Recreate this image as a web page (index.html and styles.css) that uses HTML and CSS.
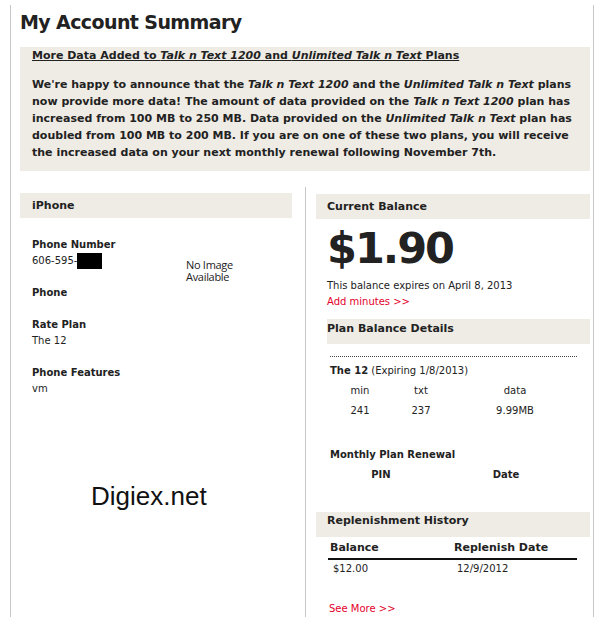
FILE: index.html
```html
<!DOCTYPE html>
<html>
<head>
<meta charset="utf-8">
<link rel="stylesheet" href="styles.css">
</head>
<body>
<div class="page">
  <h1 class="title">My Account Summary</h1>
  <div class="notice">
    <div class="notice-head"><u>More Data Added to <i>Talk n Text 1200</i> and <i>Unlimited Talk n Text</i> Plans</u></div>
    <p class="notice-body">We're happy to announce that the <i>Talk n Text 1200</i> and the <i>Unlimited Talk n Text</i> plans now provide more data! The amount of data provided on the <i>Talk n Text 1200</i> plan has increased from 100 MB to 250 MB. Data provided on the <i>Unlimited Talk n Text</i> plan has doubled from 100 MB to 200 MB. If you are on one of these two plans, you will receive the increased data on your next monthly renewal following November 7th.</p>
  </div>
  <div class="columns">
    <div class="col-left">
      <div class="bar bar-left">iPhone</div>
      <div class="phone">
        <div class="fields">
          <div class="field"><div class="label">Phone Number</div><div class="value">606-595-<span class="redact"></span></div></div>
          <div class="field"><div class="label">Phone</div></div>
          <div class="field"><div class="label">Rate Plan</div><div class="value">The 12</div></div>
          <div class="field"><div class="label">Phone Features</div><div class="value">vm</div></div>
        </div>
        <div class="noimage">No Image<br>Available</div>
      </div>
      <div class="watermark">Digiex.net</div>
    </div>
    <div class="col-right">
      <div class="bar bar-right">Current Balance</div>
      <div class="balance">$1.90</div>
      <div class="text">This balance expires on April 8, 2013</div>
      <div class="text link">Add minutes &gt;&gt;</div>
      <div class="bar bar-plan">Plan Balance Details</div>
      <div class="plan">
        <div class="plan-name"><b>The 12</b> (Expiring 1/8/2013)</div>
        <div class="usage">
          <span>min</span><span>txt</span><span>data</span>
          <span>241</span><span>237</span><span>9.99MB</span>
        </div>
        <div class="renew-title">Monthly Plan Renewal</div>
        <div class="renew">
          <span>PIN</span><span>Date</span>
        </div>
      </div>
      <div class="bar bar-right bar-hist">Replenishment History</div>
      <div class="hist">
        <div class="hist-head"><span>Balance</span><span>Replenish Date</span></div>
        <div class="hist-row"><span>$12.00</span><span>12/9/2012</span></div>
      </div>
      <div class="text link seemore">See More &gt;&gt;</div>
    </div>
  </div>
</div>
</body>
</html>
```
FILE: styles.css
```css
html, body {
  margin: 0;
  padding: 0;
  background: #fff;
}
body {
  font-family: "DejaVu Sans", Verdana, sans-serif;
  color: #222;
  font-size: 10px;
}
.page {
  margin: 5px 0 0 10px;
  width: 584px;
  height: 612px;
  border-left: 1px solid #c8c8c8;
  border-right: 1px solid #c8c8c8;
  padding-left: 9px;
  box-sizing: border-box;
}
.title {
  margin: 0;
  padding-top: 5px;
  font-size: 19px;
  line-height: 24px;
  letter-spacing: -0.6px;
  font-weight: bold;
  color: #222;
}
.notice {
  margin-top: 13px;
  width: 570px;
  background: #efece5;
  padding: 1px 12px 10px 12px;
  box-sizing: border-box;
  font-weight: bold;
  font-size: 11px;
}
.notice-head {
  line-height: 16px;
}
.notice-body {
  margin: 12px 0 0 0;
  line-height: 17px;
}
.columns {
  display: flex;
  margin-top: 16px;
  height: 430px;
}
.col-left {
  width: 286px;
  border-right: 1px solid #c8c8c8;
  padding-top: 6px;
  box-sizing: border-box;
}
.col-right {
  flex: 1;
  padding-top: 7px;
  padding-left: 10px;
}
.bar {
  background: #efece5;
  font-weight: bold;
  font-size: 11px;
  height: 25px;
  line-height: 25px;
}
.bar-left {
  width: 272px;
  padding-left: 12px;
  box-sizing: border-box;
}
.bar-right {
  width: 274px;
  padding-left: 11px;
  box-sizing: border-box;
}
.bar-plan {
  margin-left: 11px;
  width: 263px;
  line-height: 19px;
  margin-top: 9px;
}
.phone {
  display: flex;
  padding: 19px 0 0 12px;
}
.fields {
  width: 154px;
}
.field {
  margin-bottom: 16px;
}
.label {
  font-weight: bold;
  line-height: 16px;
}
.value {
  line-height: 16px;
  display: flex;
  align-items: center;
}
.redact {
  display: inline-block;
  width: 25px;
  height: 16px;
  background: #000;
}
.noimage {
  margin-top: 22px;
  font-size: 11px;
  line-height: 12px;
  font-family: "Open Sans", sans-serif;
  letter-spacing: -0.3px;
}
.watermark {
  font-family: "Liberation Sans", Arial, sans-serif;
  font-size: 26px;
  color: #111;
  margin: 68px 0 0 71px;
}
.balance {
  margin-left: 11px;
  font-size: 43px;
  letter-spacing: -2px;
  font-weight: bold;
  line-height: 59px;
  color: #222;
}
.text {
  margin-left: 11px;
  line-height: 16px;
}
.link {
  color: #e4002b;
}
.plan {
  margin-left: 14px;
  width: 247px;
  border-top: 1px dotted #444;
  margin-top: 12px;
  padding-top: 6px;
}
.plan-name {
  line-height: 16px;
}
.usage {
  display: grid;
  grid-template-columns: 60px 62px 126px;
  grid-auto-rows: 20px;
  align-items: center;
  text-align: center;
  margin-top: 1px;
}
.renew-title {
  margin-top: 27px;
  font-weight: bold;
  line-height: 16px;
}
.renew {
  display: grid;
  grid-template-columns: 102px 148px;
  text-align: center;
  font-weight: bold;
  line-height: 20px;
  margin-top: 2px;
}
.bar-hist {
  margin-top: 27px;
  line-height: 18px;
}
.hist {
  margin-left: 12px;
  width: 249px;
}
.hist-head {
  display: grid;
  grid-template-columns: 124px 1fr;
  font-weight: bold;
  font-size: 11px;
  line-height: 20px;
  padding-top: 1px;
  margin-bottom: -1px;
  border-bottom: 2px solid #111;
  padding-left: 2px;
}
.hist-row {
  display: grid;
  grid-template-columns: 124px 1fr;
  line-height: 20px;
  padding-left: 5px;
}
.seemore {
  margin-left: 13px;
  margin-top: 22px;
}
```
